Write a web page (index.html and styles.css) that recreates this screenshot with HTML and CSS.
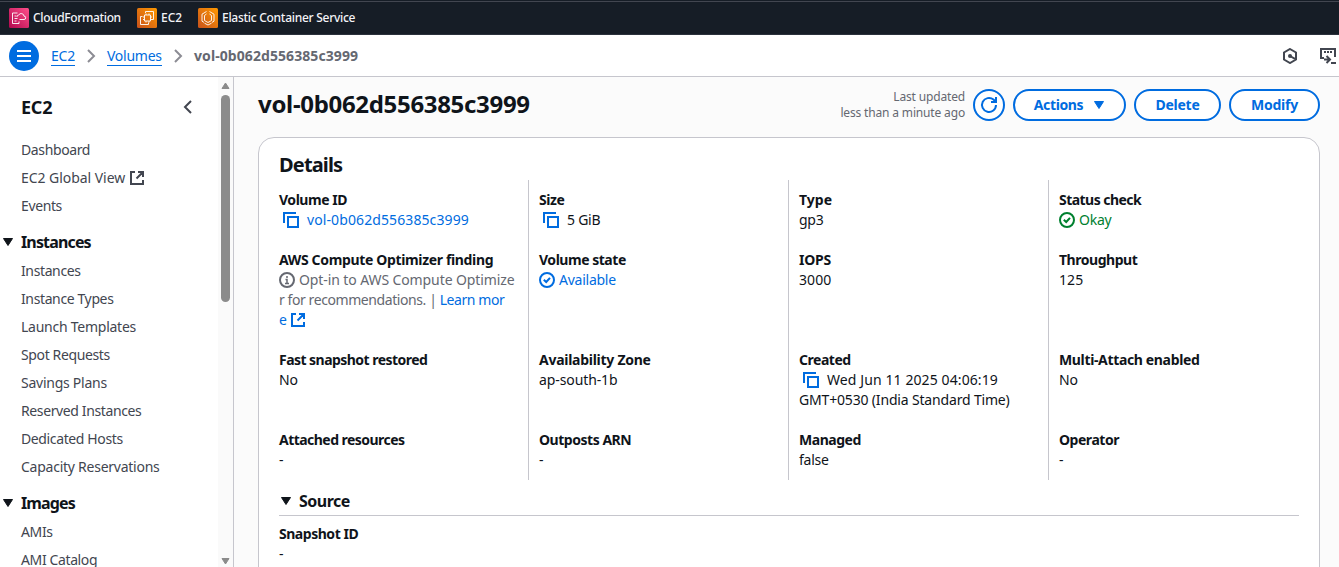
FILE: index.html
```html
<!DOCTYPE html>
<html lang="en">
<head>
<meta charset="utf-8">
<title>EC2 | Volume details</title>
<link rel="stylesheet" href="styles.css">
</head>
<body>
<svg width="0" height="0" class="defs">
  <defs>
    <linearGradient id="pink" x1="0" y1="1" x2="1" y2="0"><stop offset="0" stop-color="#b0084d"/><stop offset="1" stop-color="#ff4f8b"/></linearGradient>
    <linearGradient id="orange" x1="0" y1="1" x2="1" y2="0"><stop offset="0" stop-color="#c8511b"/><stop offset="1" stop-color="#ff9900"/></linearGradient>
    <symbol id="copy" viewBox="0 0 16 16"><path d="M1 11V1h12M5 5h10v10H5z" fill="none" stroke="currentColor" stroke-width="2"/></symbol>
    <symbol id="external" viewBox="0 0 16 16"><path d="M6 2H2v12h12v-4M9 2h5v5M13.500 2.500 7.500 8.500" fill="none" stroke="currentColor" stroke-width="2"/></symbol>
    <symbol id="check" viewBox="0 0 16 16"><circle cx="8" cy="8" r="7" fill="none" stroke="currentColor" stroke-width="2"/><path d="m4.800 7.800 2.400 2.200L11 5.800" fill="none" stroke="currentColor" stroke-width="2"/></symbol>
    <symbol id="caret" viewBox="0 0 12 10"><path d="M1.500 1.500h9L6 8.500z" fill="currentColor" stroke="currentColor" stroke-linejoin="round"/></symbol>
    <symbol id="chevron" viewBox="0 0 16 16"><path d="m5 2 6 6-6 6" fill="none" stroke="currentColor" stroke-width="2"/></symbol>
  </defs>
</svg>

<nav class="favorites">
  <a class="fav fav-cf">
    <svg width="20" height="20"><rect width="20" height="20" rx="1.500" fill="url(#pink)"/><g fill="none" stroke="#fff" stroke-opacity=".9"><path d="M8.500 5h-5v10.500h6.500v-2M5.500 8h2M5.500 10.500h3M5.500 13h2"/><path d="M10.500 11.500h4.500a1.700 1.700 0 0 0 0-3.400 2.800 2.800 0 0 0-5.200-1.200 2 2 0 0 0-1.800 2"/></g></svg>
    <span>CloudFormation</span>
  </a>
  <a class="fav fav-ec2">
    <svg width="20" height="20"><rect width="20" height="20" rx="1.500" fill="url(#orange)"/><g fill="none" stroke="#fff" stroke-opacity=".9"><path d="M8.500 5V3.500h8v8H15M7.500 7h6v6h-6zM5.500 8.500h-2v8h8v-2M9 5.500V7m3-1.500V7m1.500 2H15m-1.500 2.500H15M9 13v1.500m3-1.500v1.500M6 9h1.500M6 11.500h1.500"/></g></svg>
    <span>EC2</span>
  </a>
  <a class="fav fav-ecs">
    <svg width="20" height="20"><rect width="20" height="20" rx="1.500" fill="url(#orange)"/><g fill="none" stroke="#fff" stroke-opacity=".9"><path d="m8.500 3.500-4.500 2.700v7l2 1.200M11.500 3.500 16 6.200v7l-2 1.200M6.500 15.200 10 17l3.500-1.800"/><path d="M8.500 6 6.500 7.500v5L10 14.500l3.500-2v-5L11.500 6"/></g></svg>
    <span>Elastic Container Service</span>
  </a>
</nav>

<header class="crumbs">
  <button class="menu"><svg width="14" height="12"><path d="M0 1h14M0 6h14M0 11h14" stroke="#fff" stroke-width="2"/></svg></button>
  <a class="crumb crumb-ec2">EC2</a>
  <svg class="sep" width="16" height="16"><use href="#chevron"/></svg>
  <a class="crumb crumb-vol">Volumes</a>
  <svg class="sep" width="16" height="16"><use href="#chevron"/></svg>
  <span class="here">vol-0b062d556385c3999</span>
  <span class="tools">
    <svg width="16" height="16"><path d="m8 1 6 3.500v7L8 15l-6-3.500v-7z" fill="none" stroke="currentColor" stroke-width="2"/><circle cx="8" cy="8" r="2" fill="currentColor"/><path d="m8 8 5 2.800" stroke="currentColor" stroke-width="2"/></svg>
    <svg width="17" height="16"><path d="M4 10H1V1h14v8" fill="none" stroke="currentColor" stroke-width="2"/><path d="M4 4h2m1 0h2m1 0h2" stroke="currentColor" stroke-width="2"/><path d="M4 11.500h5.500M6.500 8l3.500 3.500L6.500 15M11 15h5" fill="none" stroke="currentColor" stroke-width="2"/></svg>
  </span>
</header>

<div class="body">
  <aside class="side">
    <div class="side-nav">
      <div class="side-title"><h2>EC2</h2><svg width="16" height="16"><path d="M11 2 5 8l6 6" fill="none" stroke="currentColor" stroke-width="2"/></svg></div>
      <a class="item">Dashboard</a>
      <a class="item wide">EC2 Global View<svg width="16" height="16"><use href="#external"/></svg></a>
      <a class="item">Events</a>
      <h3 class="group"><svg width="12" height="10"><use href="#caret"/></svg>Instances</h3>
      <a class="item">Instances</a>
      <a class="item">Instance Types</a>
      <a class="item launch">Launch Templates</a>
      <a class="item">Spot Requests</a>
      <a class="item launch">Savings Plans</a>
      <a class="item">Reserved Instances</a>
      <a class="item">Dedicated Hosts</a>
      <a class="item launch">Capacity Reservations</a>
      <h3 class="group"><svg width="12" height="10"><use href="#caret"/></svg>Images</h3>
      <a class="item">AMIs</a>
      <a class="item">AMI Catalog</a>
    </div>
    <div class="scroll">
      <svg width="9" height="8"><path d="M4.500 1 8 6.500H1z" fill="#8b8b8b" stroke="#8b8b8b" stroke-linejoin="round"/></svg>
      <span class="thumb"></span>
      <svg class="down" width="9" height="8"><path d="M4.500 7 1 1.500h7z" fill="#8b8b8b" stroke="#8b8b8b" stroke-linejoin="round"/></svg>
    </div>
  </aside>

  <main class="main">
    <div class="page-head">
      <h1>vol-0b062d556385c3999</h1>
      <p class="updated">Last updated<br>less than a minute ago</p>
      <button class="btn refresh"><svg width="18" height="18"><path d="M16 9a7 7 0 1 1-2.500-5.400L15.500 5.500M16 1v5h-5" fill="none" stroke="currentColor" stroke-width="2"/></svg></button>
      <button class="btn actions">Actions<svg width="12" height="10"><use href="#caret"/></svg></button>
      <button class="btn delete">Delete</button>
      <button class="btn modify">Modify</button>
    </div>

    <section class="card">
      <h2>Details</h2>
      <div class="grid">
        <div class="col">
          <dl class="cell r1"><dt>Volume ID</dt><dd class="blue"><svg class="copy" width="16" height="16"><use href="#copy"/></svg><span class="digits">vol-0b062d556385c3999</span></dd></dl>
          <dl class="cell r2"><dt class="finding">AWS Compute Optimizer finding</dt><dd class="grey"><svg class="icon" width="16" height="16"><circle cx="8" cy="8" r="7" fill="none" stroke="currentColor" stroke-width="2"/><path d="M8 4v2M6.500 7.500H8V11M6 11.500h4" fill="none" stroke="currentColor" stroke-width="1.500"/></svg><span class="opt1">Opt-in to AWS Compute Optimize</span><br><span class="opt2">r for recommendations. | <a class="blue">Learn mor</a></span><br><a class="blue">e <svg class="ext" width="16" height="16"><use href="#external"/></svg></a></dd></dl>
          <dl class="cell r3"><dt class="tight">Fast snapshot restored</dt><dd>No</dd></dl>
          <dl class="cell"><dt class="tight">Attached resources</dt><dd>-</dd></dl>
        </div>
        <div class="col">
          <dl class="cell r1"><dt>Size</dt><dd><svg class="copy" width="16" height="16"><use href="#copy"/></svg>5 GiB</dd></dl>
          <dl class="cell r2"><dt>Volume state</dt><dd class="blue"><svg class="icon" width="16" height="16"><use href="#check"/></svg>Available</dd></dl>
          <dl class="cell r3"><dt class="loose">Availability Zone</dt><dd class="az">ap-south-1b</dd></dl>
          <dl class="cell"><dt>Outposts ARN</dt><dd>-</dd></dl>
        </div>
        <div class="col">
          <dl class="cell r1"><dt class="type">Type</dt><dd>gp3</dd></dl>
          <dl class="cell r2"><dt class="loose">IOPS</dt><dd class="digits">3000</dd></dl>
          <dl class="cell r3"><dt>Created</dt><dd><svg class="copy" width="16" height="16"><use href="#copy"/></svg><span class="digits">Wed Jun 11 2025 04:06:19</span><br><span class="zone">GMT+0530 (India Standard Time)</span></dd></dl>
          <dl class="cell"><dt>Managed</dt><dd>false</dd></dl>
        </div>
        <div class="col">
          <dl class="cell r1"><dt class="tight">Status check</dt><dd class="green"><svg class="icon" width="16" height="16"><use href="#check"/></svg>Okay</dd></dl>
          <dl class="cell r2"><dt>Throughput</dt><dd class="digits">125</dd></dl>
          <dl class="cell r3"><dt class="finding">Multi-Attach enabled</dt><dd>No</dd></dl>
          <dl class="cell"><dt>Operator</dt><dd>-</dd></dl>
        </div>
      </div>
      <h3 class="source"><svg width="12" height="10"><use href="#caret"/></svg>Source</h3>
      <dl class="cell"><dt>Snapshot ID</dt><dd>-</dd></dl>
    </section>
  </main>
</div>
</body>
</html>
```
FILE: styles.css
```css
* { box-sizing: border-box; }
body { margin: 0; height: 567px; overflow: hidden; display: flex; flex-direction: column; background: #fff; color: #0f141a; font: 14px/20px "Noto Sans", "Open Sans", sans-serif; letter-spacing: -0.25px; white-space: nowrap; }
h1, h2, h3, p, dl, dd { margin: 0; }
svg { display: block; flex: none; }
.defs { position: absolute; }
button { font: inherit; letter-spacing: inherit; padding: 0; }

.favorites { flex: none; height: 35px; background: #161d26; border-bottom: 1px solid #2b313c; box-shadow: inset 0 1px #161d26, inset 0 2px #424650; display: flex; align-items: center; padding: 1px 0 0 9px; color: #f3f3f7; font-size: 12px; font-weight: 500; letter-spacing: 0; }
.fav { display: flex; align-items: center; gap: 4px; }
.fav-cf { width: 128px; letter-spacing: -0.36px; }
.fav-ec2 { width: 61px; }
.fav-ecs { letter-spacing: -0.28px; }

.crumbs { flex: none; height: 42px; border-bottom: 1px solid #c6c6cd; display: flex; align-items: center; padding: 0 2px 0 9px; color: #656871; }
.menu { width: 30px; height: 30px; border: 0; border-radius: 50%; background: #006ce0; display: grid; place-items: center; margin-right: 12px; }
.crumb { color: #006ce0; border-bottom: 1px solid #006ce0; line-height: 19px; }
.crumb-ec2 { width: 24px; }
.crumb-vol { width: 55px; }
.sep { margin: 0 8px; color: #8c8c94; }
.here { font-weight: 700; letter-spacing: 0.08px; }
.tools { margin-left: auto; display: flex; gap: 22px; color: #424650; }

.body { flex: 1; min-height: 0; display: flex; }
.side { width: 234px; border-right: 1px solid #c6c6cd; display: flex; color: #424650; }
.side-nav { width: 218px; overflow: hidden; }
.side-title { height: 59px; padding: 0 22px 0 21px; display: flex; align-items: center; justify-content: space-between; }
.side-title h2 { font-size: 18px; line-height: 22px; color: #0f141a; }
.item { display: flex; align-items: center; gap: 4px; height: 28px; padding-left: 21px; letter-spacing: -0.38px; }
.wide { letter-spacing: -0.05px; }
.launch { letter-spacing: -0.25px; }
.group { display: flex; align-items: center; gap: 7px; height: 34px; margin: 6px 0 -3px; padding: 0 0 3px 2px; font-size: 16px; letter-spacing: -0.85px; color: #0f141a; }
.scroll { width: 15px; background: #fafafa; display: flex; flex-direction: column; align-items: center; padding: 5px 0 2px; }
.thumb { width: 9px; height: 207px; margin-top: 5px; border-radius: 5px; background: #8b8b8b; }
.down { margin-top: auto; }

.main { flex: 1; min-width: 0; background: #fbfbfb; padding: 12px 19px 0 24px; overflow: hidden; }
.page-head { height: 32px; display: flex; align-items: center; }
h1 { font-size: 24px; line-height: 30px; padding-bottom: 2px; letter-spacing: -0.32px; }
.updated { margin-left: auto; margin-right: 8px; text-align: right; font-size: 12px; line-height: 16px; letter-spacing: -0.16px; color: #656871; }
.btn { height: 32px; border: 2px solid #006ce0; border-radius: 16px; background: #fff; color: #006ce0; font-weight: 700; display: flex; align-items: center; justify-content: center; margin-left: 8px; }
.refresh { width: 32px; margin-left: 0; }
.actions { width: 113px; gap: 10px; letter-spacing: -0.38px; }
.delete { width: 87px; }
.modify { width: 91px; }

.card { margin-top: 16px; height: 460px; border: 1px solid #c6c6cd; border-radius: 16px; background: #fff; padding: 15px 20px 0; }
.card h2 { font-size: 20px; line-height: 24px; letter-spacing: -0.85px; }
.grid { display: grid; grid-template-columns: 250px 260px 260px 1fr; margin-top: 3px; }
.col { height: 300px; padding: 10px 0 0 10px; border-left: 1px solid #c6c6cd; }
.col:first-child { padding-left: 0; border-left: 0; }
.col:not(:first-child) { margin-left: -1px; }
.r1 { height: 60px; }
.r2 { height: 100px; }
.r3 { height: 80px; }
dt { font-weight: 700; letter-spacing: -0.47px; }
.finding { letter-spacing: -0.35px; }
.tight { letter-spacing: -0.54px; }
.loose { letter-spacing: -0.27px; }
.type { letter-spacing: 0; }
.digits { letter-spacing: 0.1px; }
.opt1 { letter-spacing: -0.1px; }
.opt2 { letter-spacing: -0.42px; }
.az { letter-spacing: -0.1px; }
.zone { letter-spacing: -0.17px; }
.blue, .copy { color: #006ce0; }
.grey { color: #656871; }
.green { color: #00802f; }
dd svg { display: inline-block; vertical-align: -3px; }
.copy { margin: 0 8px 0 4px; }
.icon { margin-right: 4px; }
.source { height: 36px; border-bottom: 1px solid #c6c6cd; margin-bottom: 8px; display: flex; align-items: center; gap: 7px; padding: 7px 0 0 1px; font-size: 16px; letter-spacing: -0.5px; }
```
